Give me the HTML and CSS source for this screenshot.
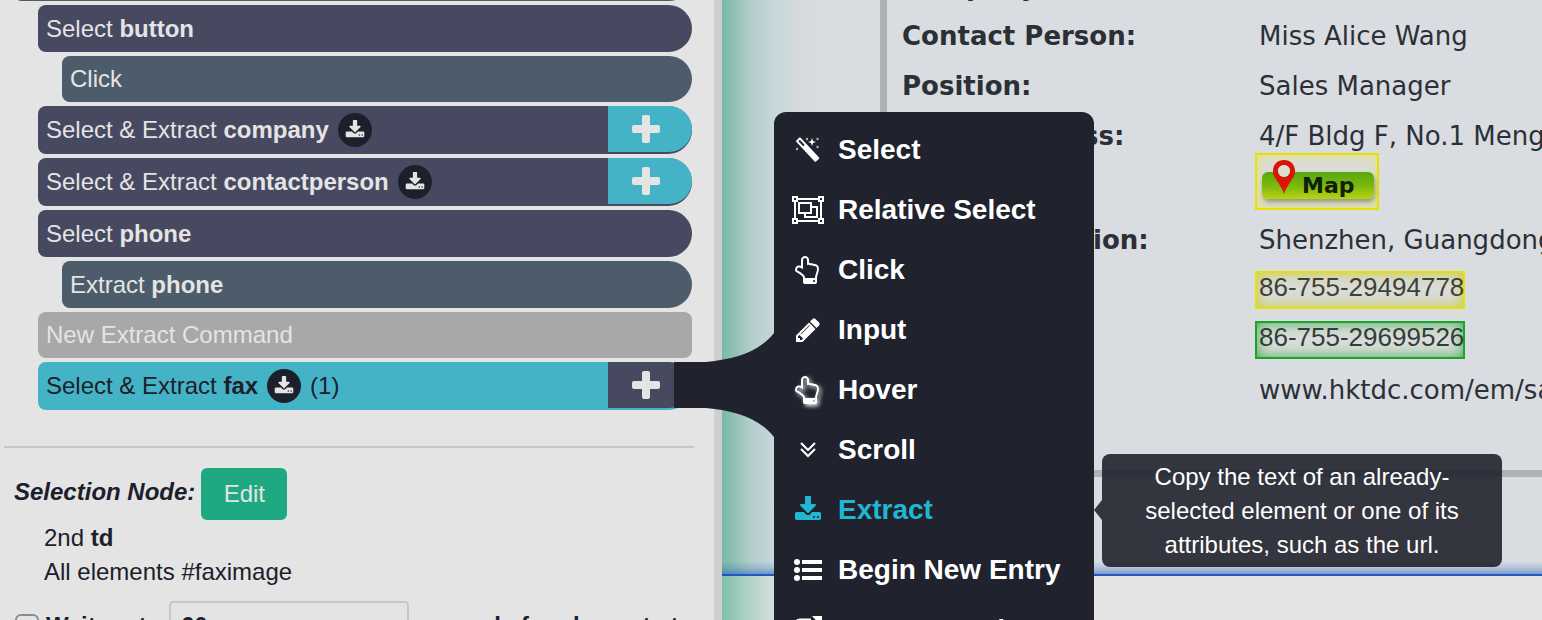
FILE: index.html
```html
<!DOCTYPE html>
<html lang="en">
<head>
<meta charset="utf-8">
<title>Command editor</title>
<link rel="stylesheet" href="styles.css">
</head>
<body>
<svg class="sprite" aria-hidden="true">
  <symbol id="download" viewBox="0 0 1792 1792"><path d="M1344 1344q0-26-19-45t-45-19-45 19-19 45 19 45 45 19 45-19 19-45zm256 0q0-26-19-45t-45-19-45 19-19 45 19 45 45 19 45-19 19-45zm128-224v320q0 40-28 68t-68 28H160q-40 0-68-28t-28-68v-320q0-40 28-68t68-28h465l135 136q58 56 136 56t136-56l136-136h464q40 0 68 28t28 68zm-325-569q17 41-14 70l-448 448q-18 19-45 19t-45-19L403 621q-31-29-14-70 17-39 59-39h256V64q0-26 19-45t45-19h256q26 0 45 19t19 45v448h256q42 0 59 39z"/></symbol>
  <symbol id="hand" viewBox="0 0 1792 1792"><path d="M1344 1600q0-26-19-45t-45-19-45 19-19 45 19 45 45 19 45-19 19-45zm128-764q0-189-167-189-26 0-56 5-16-30-52.500-47.500t-73.500-17.500-69 18q-50-53-119-53-25 0-55.500 10t-47.500 25v-331q0-52-38-90t-90-38q-51 0-89.500 39t-38.500 89v576q-20 0-48.500-15t-55-33-68-33-84.500-15q-67 0-97.500 44.500t-30.500 115.500q0 24 139 90 44 24 65 37 64 40 145 112 81 71 106 101 57 69 57 140v32h640v-32q0-72 32-167t64-193.500 32-179.500zm128-5q0 133-69 322-59 164-59 223v288q0 53-37.500 90.500t-90.500 37.500H704q-53 0-90.500-37.500t-37.500-90.500v-288q0-10-4.500-21.500t-14-23.500-18-22.500-22.500-24-21.500-20.500-21.500-19-17-14q-74-65-129-100-21-13-62-33t-72-37-63-40.500-49.500-55-17.500-69.500q0-125 67-206.500t189-81.500q68 0 128 22V256q0-104 76-180T704 0q105 0 181 76t76 180v169q62 4 119 37 21-3 43-3 101 0 178 60 139-1 219.500 85t80.500 227z"/></symbol>
  <symbol id="plus" viewBox="0 0 28 28"><path d="M12 0h4q2 0 2 2v8h8q2 0 2 2v4q0 2-2 2h-8v8q0 2-2 2h-4q-2 0-2-2v-8H2q-2 0-2-2v-4q0-2 2-2h8V2q0-2 2-2z"/></symbol>
</svg>

<div class="app">
  <aside class="sidebar">
    <ul class="commands">
      <li class="command command-root"></li>
      <li class="command command-select"><span>Select <b>button</b></span></li>
      <li class="command command-child"><span>Click</span></li>
      <li class="command command-select has-add"><span>Select &amp; Extract <b>company</b></span><span class="badge"><svg><use href="#download"/></svg></span><button class="add" type="button" aria-label="Add command"><svg><use href="#plus"/></svg></button></li>
      <li class="command command-select has-add"><span>Select &amp; Extract <b>contactperson</b></span><span class="badge"><svg><use href="#download"/></svg></span><button class="add" type="button" aria-label="Add command"><svg><use href="#plus"/></svg></button></li>
      <li class="command command-select"><span>Select <b>phone</b></span></li>
      <li class="command command-child command-value"><span>Extract <b>phone</b></span></li>
      <li class="command command-new"><span>New Extract Command</span></li>
      <li class="command command-select has-add active"><span>Select &amp; Extract <b>fax</b></span><span class="badge"><svg><use href="#download"/></svg></span><span>(1)</span><button class="add" type="button" aria-label="Add command"><svg><use href="#plus"/></svg></button></li>
    </ul>
    <section class="details">
      <div class="node-head"><span class="node-title">Selection Node:</span><button class="edit" type="button">Edit</button></div>
      <div class="node-path">
        <div>2nd <b>td</b></div>
        <div>All elements #faximage</div>
      </div>
      <div class="wait">
        <input class="wait-check" type="checkbox" id="wait">
        <label class="wait-label" for="wait">Wait up to</label>
        <input class="wait-time" type="text" value="60" aria-label="Seconds to wait">
        <span>seconds for elements to</span>
      </div>
    </section>
  </aside>

  <main class="page">
    <div class="highlighted">
      <table class="contact">
        <tr><th scope="row">Company:</th><td></td></tr>
        <tr><th scope="row">Contact Person:</th><td>Miss Alice Wang</td></tr>
        <tr><th scope="row">Position:</th><td>Sales Manager</td></tr>
        <tr class="address"><th scope="row">Office Address:</th><td>4/F Bldg F, No.1 Mengxi Road
          <a class="map" href="#map">
            <span class="map-pill">Map</span>
            <svg class="pin" viewBox="0 0 22 34"><path fill-rule="evenodd" fill="#dc1408" d="M11 0C4.500 0 0 4.500 0 11c0 5 3 8 5.500 12 2 3.500 4.500 7 5.500 11 1-4 3.500-7.500 5.500-11C19 19 22 16 22 11 22 4.500 17.500 0 11 0zm0 5a6 6 0 1 1 0 12 6 6 0 0 1 0-12z"/><circle cx="11" cy="11" r="6" fill="#dedfd0"/></svg>
          </a></td></tr>
        <tr><th scope="row">Country/ Region:</th><td>Shenzhen, Guangdong, China</td></tr>
        <tr class="number"><th scope="row">Phone:</th><td><span class="pick">86-755-29494778</span></td></tr>
        <tr class="number"><th scope="row">Fax:</th><td><span class="pick pick-current">86-755-29699526</span></td></tr>
        <tr><th scope="row">Website:</th><td>www.hktdc.com/em/sales</td></tr>
      </table>
    </div>
  </main>

  <div class="popup">
    <svg class="tail" viewBox="0 0 100 104"><path d="M0 29H32C62 26 85 19 100 0V104C85 85 62 78 32 75H0z"/></svg>
    <div class="menu">
      <button type="button"><svg class="icon" viewBox="0 0 36 36"><path fill-rule="evenodd" transform="rotate(47 18 18)" d="M4 15h27q1 0 1 1v4q0 1-1 1H4q-1 0-1-1v-4q0-1 1-1zm1 2v2h7v-2z"/><path d="M22 6l1 3 3 1-3 1-1 3-1-3-3-1 3-1z"/><g opacity=".65"><circle cx="17" cy="7" r="1.200"/><circle cx="27.500" cy="7" r="1.200"/><circle cx="27.500" cy="15" r="1.200"/><circle cx="7" cy="17" r="1.200"/></g></svg>Select</button>
      <button type="button"><svg class="icon" viewBox="0 0 36 36"><path fill="none" stroke="#fff" stroke-width="2" d="M3 5h4v4H3zM29 5h4v4h-4zM3 27h4v4H3zM29 27h4v4h-4zM7 7h22M7 29h22M5 9v18M31 9v18M9 11h12v10H9zM21 15h6v10H15v-4"/></svg>Relative Select</button>
      <button type="button"><svg class="icon hand"><use href="#hand"/></svg>Click</button>
      <button type="button"><svg class="icon hand" viewBox="0 0 1792 1792"><path d="M491 1536l91-91-235-235-91 91v107h128v128h107zm523-928q0-22-22-22-10 0-17 7l-542 542q-7 7-7 17 0 22 22 22 10 0 17-7l542-542q7-7 7-17zm-54-192l416 416-832 832H128v-416zm683 96q0 53-37 90l-166 166-416-416 166-165q36-38 90-38 53 0 91 38l235 234q37 39 37 91z"/></svg>Input</button>
      <button type="button"><svg class="icon hand raised"><use href="#hand"/></svg>Hover</button>
      <button type="button"><svg class="icon" viewBox="0 0 36 36"><path fill="none" stroke="#fff" stroke-width="2" d="M11 11l7 7 7-7M11 17l7 7 7-7"/></svg>Scroll</button>
      <button type="button" class="current" aria-describedby="extract-tip"><svg class="icon hand"><use href="#download"/></svg>Extract</button>
      <button type="button"><svg class="icon" viewBox="0 0 36 36"><circle cx="7" cy="10" r="3"/><circle cx="7" cy="18" r="3"/><circle cx="7" cy="26" r="3"/><path d="M12 8h20v4H12zM12 16h20v4H12zM12 24h20v4H12z"/></svg>Begin New Entry</button>
      <button type="button"><svg class="icon" viewBox="0 0 36 36"><path fill="none" stroke="#fff" stroke-width="3" d="M21 8H10q-4 0-4 4v14q0 4 4 4h14q4 0 4-4v-6M16 20L29 7"/><path d="M22 4h10v11z"/></svg>Go To Template</button>
    </div>
    <div class="tooltip" id="extract-tip" role="tooltip">Copy the text of an already-selected element or one of its attributes, such as the url.</div>
  </div>
</div>
</body>
</html>
```
FILE: styles.css
```css
* { box-sizing: border-box; }
body {
  margin: 0;
  font: 24px/34px "Liberation Sans", Arial, sans-serif;
  color: #1c202b;
  background: #e4e4e4;
}
button, input { font: inherit; color: inherit; }
button { border: 0; padding: 0; cursor: pointer; }
svg { fill: currentColor; display: block; }
.sprite { position: absolute; width: 0; height: 0; }

.app {
  position: relative;
  display: flex;
  height: 100vh;
  overflow: hidden;
}

/* Command list */
.sidebar {
  flex: 0 0 722px;
  overflow: hidden;
  border-right: 8px solid #cecece;
  background: #e4e4e4;
}
.commands {
  list-style: none;
  display: flex;
  flex-direction: column;
  gap: 4px;
  margin: -45px 22px 0 14px;
  padding: 0;
}
.command {
  display: flex;
  align-items: center;
  height: 46px;
  padding-left: 8px;
  border-radius: 8px 24px 24px 8px;
  color: #e4e4e4;
  background: #4d5c6a;
  white-space: nowrap;
}
.command-select { height: 47px; margin-left: 24px; background: #46495f; }
.command-child { margin-left: 48px; }
.command-value { height: 47px; }
.command-new { margin-left: 24px; border-radius: 8px; background: #a8a8a8; }
.has-add { height: 48px; }
.active { color: #1c202b; background: #45b3c6; }
.badge {
  display: grid;
  place-items: center;
  width: 34px;
  height: 34px;
  margin: 0 9px;
  border-radius: 50%;
  color: #e4e4e4;
  background: #1c202b;
}
.badge svg { width: 20px; height: 20px; }
.add {
  display: grid;
  place-items: center;
  align-self: flex-start;
  width: 84px;
  height: 46px;
  margin-left: auto;
  padding-right: 8px;
  border-radius: 0 24px 24px 0;
  color: #e4e4e4;
  background: #45b3c6;
}
.add svg { width: 28px; height: 28px; }
.active .add { background: #46495f; }

/* Selection details */
.details {
  margin: 36px 20px 0 4px;
  padding: 20px 0 0 10px;
  border-top: 2px solid #c6c6cd;
}
.node-head { display: flex; align-items: center; gap: 6px; }
.node-title { font-weight: bold; font-style: italic; padding-bottom: 4px; }
.edit {
  width: 86px;
  height: 52px;
  border-radius: 6px;
  color: #e4e4e4;
  background: #1ea983;
}
.node-path { padding: 1px 0 0 30px; }
.wait {
  display: flex;
  align-items: center;
  margin-top: 12px;
  font-weight: bold;
  white-space: nowrap;
}
.wait-check {
  appearance: none;
  width: 24px;
  height: 24px;
  margin: 0 7px 0 1px;
  border: 2px solid #8c8c8c;
  border-radius: 6px;
  background: #e4e4e4;
}
.wait-label { width: 123px; }
.wait-time {
  width: 240px;
  height: 50px;
  margin-right: 8px;
  padding: 0 10px;
  border: 2px solid #c6c6cd;
  border-radius: 4px;
  background: #e4e4e4;
}

/* Inspected page */
.page {
  flex: 1;
  min-width: 0;
  overflow: hidden;
  background: linear-gradient(90deg, #7ebfab 0, #a5cfbe 20px, #c3d7ce 38px, #d6e0da 54px, #e4e4e4 90px);
}
.highlighted {
  padding: 0 0 97px 158px;
  overflow: hidden;
  border-bottom: 2px solid #2058bd;
  background:
    linear-gradient(0deg, rgba(32, 88, 189, .5), rgba(32, 88, 189, .2) 6px, rgba(32, 88, 189, 0) 13px) padding-box,
    linear-gradient(90deg, #7ab8aa 0, #99c3bb 16px, #b1cfc9 28px, #bbcfd4 38px, #c8d9d9 54px, #d5d9de 72px, #d9dce1 100px);
}
.contact {
  display: block;
  margin-top: -40px;
  padding: 0 0 56px 15px;
  border-left: 7px solid #aeb2b7;
  border-bottom: 7px solid #aeb2b7;
  border-spacing: 0;
  font: 26px/30px "DejaVu Sans", Verdana, sans-serif;
  color: #2c3036;
  white-space: nowrap;
}
.contact th, .contact td {
  height: 50px;
  padding: 11px 0 9px;
  text-align: left;
  vertical-align: top;
}
.contact th { min-width: 357px; }
.contact .address td { padding-bottom: 4px; }
.contact .number td { padding: 7px 0 5px; }
.pick, .map {
  display: block;
  width: 210px;
  margin-left: -4px;
  border: 2px solid #e6e200;
  box-shadow: inset 0 0 14px rgba(200, 195, 0, .75);
  background: #dadcd9;
}
.pick {
  height: 38px;
  padding-left: 2px;
  font: 26px/28px "Liberation Sans", Arial, sans-serif;
  color: #3f4136;
}
.pick-current {
  border-color: #1ba42c;
  box-shadow: inset 0 0 14px rgba(27, 164, 44, .8);
  color: #2c4038;
}
.map {
  position: relative;
  width: 124px;
  height: 57px;
  margin-top: 2px;
  padding: 17px 3px 0 5px;
  box-shadow: inset 0 0 12px rgba(240, 232, 80, .75);
  text-decoration: none;
}
.map-pill {
  display: block;
  padding-left: 40px;
  border-radius: 6px;
  font: bold 22px/27px "DejaVu Sans", Verdana, sans-serif;
  color: #10200a;
  background: linear-gradient(#57a80c, #7fb90d 55%, #b9d313);
  box-shadow: 1px 3px 4px rgba(80, 90, 40, .5);
}
.pin { position: absolute; left: 16px; top: 5px; width: 22px; height: 34px; }

/* Command picker */
.popup { position: absolute; left: 774px; top: 112px; color: #fff; }
.tail {
  position: absolute;
  right: 100%;
  top: 221px;
  width: 100px;
  height: 104px;
  color: #20222e;
}
.menu {
  width: 320px;
  padding: 8px 0;
  border-radius: 12px;
  background: #20222e;
}
.menu button {
  display: flex;
  align-items: center;
  gap: 12px;
  width: 100%;
  height: 60px;
  padding-left: 16px;
  color: #fff;
  background: none;
  font-size: 28px;
  font-weight: bold;
}
.menu .current { color: #21b7d1; }
.icon { width: 36px; height: 36px; }
.icon.hand { height: 28px; }
.raised { overflow: visible; filter: drop-shadow(2px 2px 2px #fff); }
.tooltip {
  position: absolute;
  left: 328px;
  top: 342px;
  width: 400px;
  padding: 6px 24px 5px;
  border-radius: 8px;
  background: rgba(32, 34, 46, .9);
  text-align: center;
}
.tooltip::before {
  content: "";
  position: absolute;
  right: 100%;
  top: 46px;
  border: 10px solid transparent;
  border-left-width: 0;
  border-right: 8px solid rgba(32, 34, 46, .9);
}
```
